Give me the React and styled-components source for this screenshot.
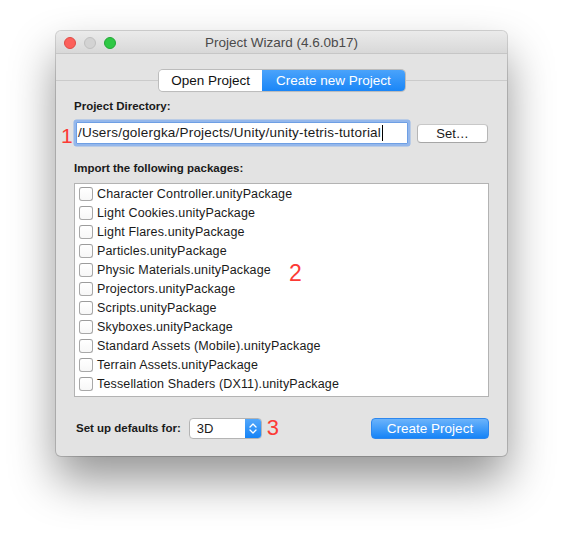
import React from 'react';
import styled, { createGlobalStyle } from 'styled-components';

const GlobalStyle = createGlobalStyle`
    html, body {
        margin: 0;
        background: #fff;
    }
    body {
        font-family: "Helvetica Neue", "Liberation Sans", Arial, sans-serif;
        color: #1a1a1a;
    }
`;

const Stage = styled.div`
    width: 563px;
    height: 537px;
    box-sizing: border-box;
    padding: 31px 0 0 56px;
`;

const Window = styled.div`
    width: 451px;
    height: 425px;
    border-radius: 5px;
    background: #e3e3e3;
    box-shadow: 0 0 0 1px rgba(0, 0, 0, 0.16), 0 24px 46px rgba(0, 0, 0, 0.42);
    display: flex;
    flex-direction: column;
    overflow: hidden;
`;

const TitleBar = styled.div`
    height: 23px;
    box-sizing: border-box;
    padding-top: 2px;
    border-bottom: 1px solid #c6c6c6;
    background: linear-gradient(#ebebeb, #d8d8d8);
    display: grid;
    grid-template-columns: 1fr auto 1fr;
    align-items: center;
    border-radius: 5px 5px 0 0;
`;

const Lights = styled.div`
    display: flex;
    gap: 8px;
    padding-left: 8px;
`;

const Light = styled.span`
    width: 12px;
    height: 12px;
    box-sizing: border-box;
    border-radius: 50%;
    background: ${p => p.$fill};
    border: 1px solid ${p => p.$edge};
`;

const Title = styled.div`
    font-size: 13.5px;
    color: #4a4a4a;
    line-height: 20px;
`;

const TabBody = styled.div`
    flex: 1;
    display: flex;
    flex-direction: column;
    padding-top: 16px;
`;

const Segments = styled.div`
    position: relative;
    z-index: 1;
    align-self: center;
    margin-left: 1px;
    display: flex;
    height: 21px;
    border-radius: 4px;
    box-shadow: 0 0 0 1px #bcbcbc, 0 1px 1px rgba(0, 0, 0, 0.1);
    overflow: hidden;
`;

const Segment = styled.div`
    padding: 0 ${p => p.$pad}px;
    font-size: 13.5px;
    line-height: 21px;
    color: ${p => (p.$active ? '#fff' : '#111')};
    background: ${p => (p.$active ? 'linear-gradient(#4aa3fb, #1a86f7)' : '#fff')};
`;

const Pane = styled.div`
    flex: 1;
    margin-top: -11px;
    border-top: 1px solid #cbcbcb;
    padding: 18px 18px 0;
    display: flex;
    flex-direction: column;
`;

const Label = styled.div`
    flex: none;
    white-space: nowrap;
    font-size: 11.5px;
    font-weight: bold;
    line-height: 14px;
    margin-top: ${p => p.$top || 0}px;
`;

const FieldRow = styled.div`
    position: relative;
    display: flex;
    align-items: center;
    margin-top: 9px;
`;

const Annotation = styled.span`
    color: #fc3a35;
    font-size: ${p => p.$size}px;
    line-height: 1;
`;

const FloatingNote = styled(Annotation)`
    position: absolute;
    left: ${p => p.$x}px;
    top: ${p => p.$y}px;
`;

const Field = styled.div`
    margin-left: 2px;
    width: 332px;
    height: 22px;
    box-sizing: border-box;
    border: 1px solid #6e9fe4;
    box-shadow: 0 0 0 2.5px rgba(122, 168, 238, 0.75);
    border-radius: 1px;
    background: #fff;
    font-size: 13.5px;
    letter-spacing: 0.2px;
    line-height: 20px;
    padding-left: 1px;
    display: flex;
    align-items: center;
    white-space: nowrap;
`;

const Caret = styled.span`
    width: 1px;
    height: 16px;
    background: #000;
    margin-left: 1px;
`;

const PushButton = styled.div`
    margin-left: 9px;
    width: 71px;
    height: 19px;
    box-sizing: border-box;
    border: 1px solid #b6b6b6;
    border-top-color: #c8c8c8;
    border-bottom-color: #a6a6a6;
    border-radius: 4px;
    background: #fff;
    font-size: 13px;
    line-height: 17px;
    text-align: center;
`;

const List = styled.div`
    position: relative;
    margin-top: 8px;
    height: 214px;
    box-sizing: border-box;
    border: 1px solid #b3b3b3;
    background: #fff;
    overflow: hidden;
    padding-left: 4px;
`;

const Row = styled.div`
    display: flex;
    align-items: center;
    gap: 4px;
    height: 19px;
    font-size: 12.5px;
    letter-spacing: 0.15px;
    white-space: nowrap;
`;

const Check = styled.span`
    width: 14px;
    height: 14px;
    box-sizing: border-box;
    border: 1px solid #a8a8a8;
    border-top-color: #9c9c9c;
    border-radius: 3px;
    background: linear-gradient(#fff, #f7f7f7);
    flex: none;
`;

const Footer = styled.div`
    display: flex;
    align-items: center;
    margin-top: 20px;
    padding-left: 2px;
`;

const Popup = styled.div`
    flex: none;
    margin-left: 8px;
    width: 73px;
    height: 21px;
    box-sizing: border-box;
    border: 1px solid #b4b4b4;
    border-radius: 4px;
    background: #fff;
    display: flex;
    overflow: hidden;
    margin-right: 5px;
`;

const PopupValue = styled.div`
    flex: 1;
    font-size: 13px;
    line-height: 19px;
    padding-left: 7px;
`;

const Stepper = styled.div`
    width: 16px;
    background: linear-gradient(#52a7fb, #1583f6);
    display: flex;
    align-items: center;
    justify-content: center;
`;

const DefaultButton = styled.div`
    margin-left: auto;
    width: 118px;
    height: 21px;
    box-sizing: border-box;
    border: 1px solid #2d87ee;
    border-radius: 4px;
    background: linear-gradient(#6bb3fb, #1684f7);
    color: #fff;
    font-size: 13.5px;
    line-height: 19px;
    text-align: center;
`;

const packages = [
    'Character Controller.unityPackage',
    'Light Cookies.unityPackage',
    'Light Flares.unityPackage',
    'Particles.unityPackage',
    'Physic Materials.unityPackage',
    'Projectors.unityPackage',
    'Scripts.unityPackage',
    'Skyboxes.unityPackage',
    'Standard Assets (Mobile).unityPackage',
    'Terrain Assets.unityPackage',
    'Tessellation Shaders (DX11).unityPackage',
    'Toon Shading.unityPackage',
];

function App() {
    return (
        <Stage>
            <GlobalStyle />
            <Window>
                <TitleBar>
                    <Lights>
                        <Light $fill="#fc605b" $edge="#df4b45" />
                        <Light $fill="#d3d3d3" $edge="#c0c0c0" />
                        <Light $fill="#2fc845" $edge="#22a836" />
                    </Lights>
                    <Title>Project Wizard (4.6.0b17)</Title>
                    <div />
                </TitleBar>
                <TabBody>
                    <Segments>
                        <Segment $pad={12}>Open Project</Segment>
                        <Segment $pad={14} $active>Create new Project</Segment>
                    </Segments>
                    <Pane>
                        <Label>Project Directory:</Label>
                        <FieldRow>
                            <FloatingNote $size={21} $x={-13} $y={3}>1</FloatingNote>
                            <Field>
                                /Users/golergka/Projects/Unity/unity-tetris-tutorial
                                <Caret />
                            </Field>
                            <PushButton>Set…</PushButton>
                        </FieldRow>
                        <Label $top={17}>Import the following packages:</Label>
                        <List>
                            {packages.map(name => (
                                <Row key={name}>
                                    <Check />
                                    {name}
                                </Row>
                            ))}
                            <FloatingNote $size={23} $x={214} $y={78}>2</FloatingNote>
                        </List>
                        <Footer>
                            <Label>Set up defaults for:</Label>
                            <Popup>
                                <PopupValue>3D</PopupValue>
                                <Stepper>
                                    <svg width="8" height="13" viewBox="0 0 8 13">
                                        <path
                                            d="M1 5 L4 2 L7 5 M1 8 L4 11 L7 8"
                                            fill="none"
                                            stroke="#fff"
                                            strokeWidth="1.3"
                                            strokeLinecap="round"
                                            strokeLinejoin="round"
                                        />
                                    </svg>
                                </Stepper>
                            </Popup>
                            <Annotation $size={22}>3</Annotation>
                            <DefaultButton>Create Project</DefaultButton>
                        </Footer>
                    </Pane>
                </TabBody>
            </Window>
        </Stage>
    );
}

export default App;
